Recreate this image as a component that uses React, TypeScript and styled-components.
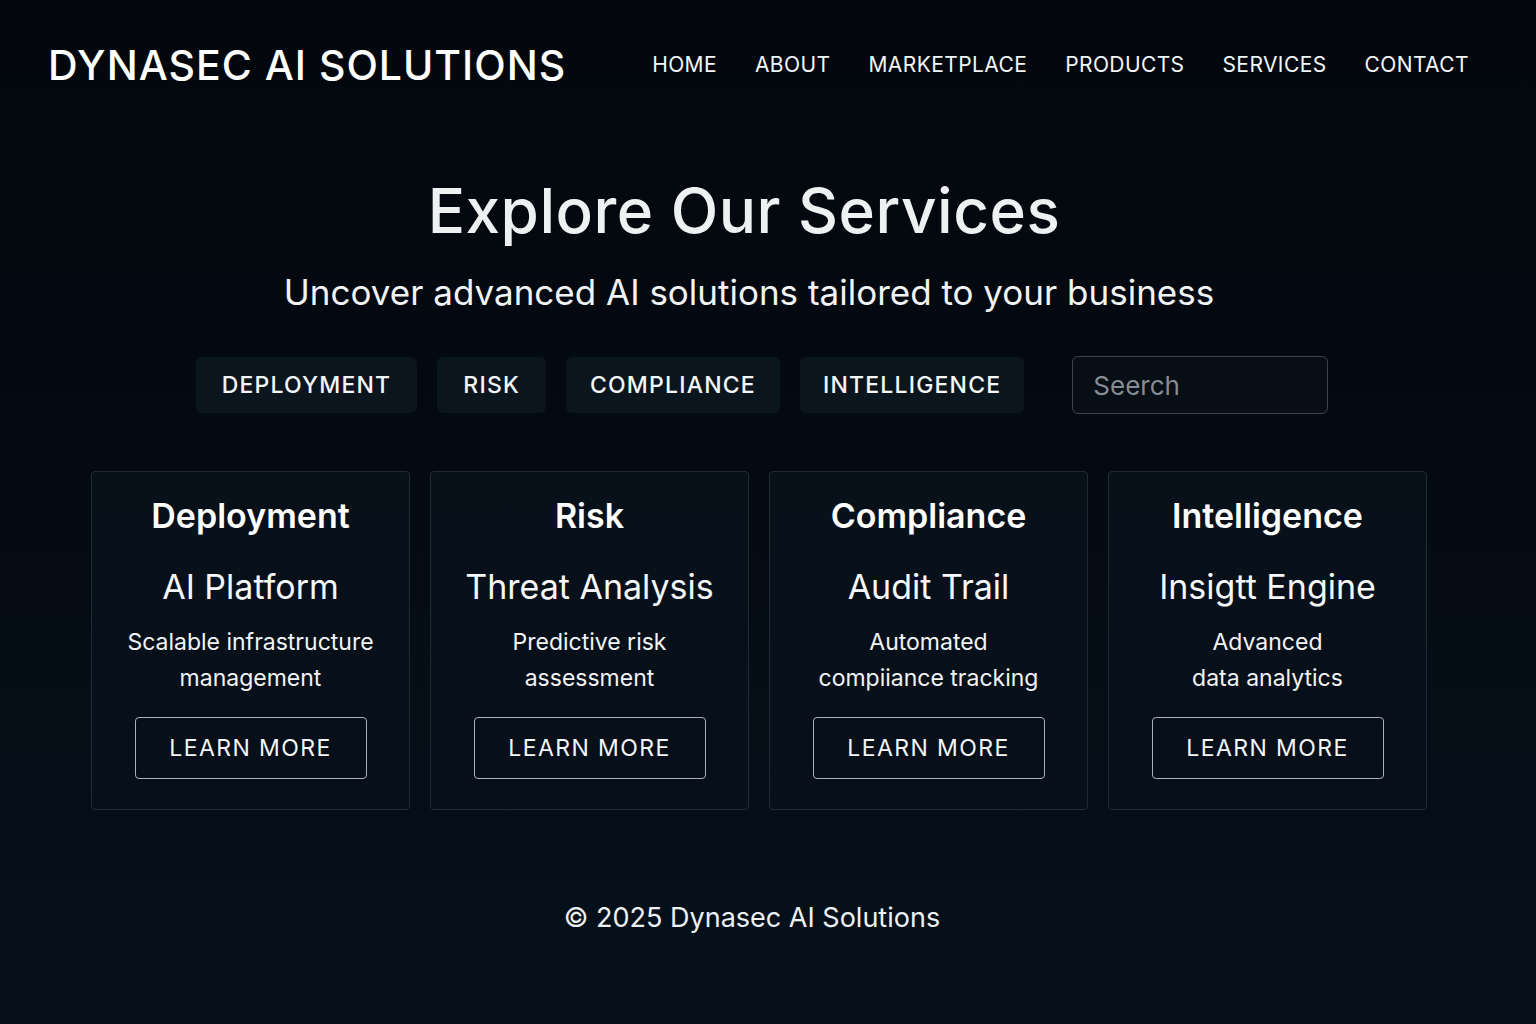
import React from 'react';
import styled, { createGlobalStyle } from 'styled-components';

const GlobalStyle = createGlobalStyle`
  html, body {
    margin: 0;
    padding: 0;
  }
  body {
    background: linear-gradient(180deg, #03070d 0%, #040a12 45%, #06111c 100%);
    color: #f3f5f7;
    font-family: Inter, "Noto Sans", "Liberation Sans", sans-serif;
    min-height: 1024px;
  }
`

const Page = styled.div`
  width: 1536px;
  min-height: 1024px;
  display: flex;
  flex-direction: column;
`

const Header = styled.header`
  display: flex;
  align-items: center;
  justify-content: space-between;
  height: 130px;
  padding: 0 67px 0 48px;
  box-sizing: border-box;
`

const Logo = styled.div`
  font-size: 41px;
  font-weight: 500;
  letter-spacing: 1px;
  color: #ffffff;
`

const Nav = styled.nav`
  display: flex;
  align-items: center;
  gap: 38px;
`

const NavLink = styled.a`
  font-size: 21px;
  font-weight: 400;
  letter-spacing: 0.4px;
  color: #f4f6f8;
  text-decoration: none;
  margin-top: -2px;
`

const Main = styled.main`
  display: flex;
  flex-direction: column;
  align-items: center;
  padding: 44px 0 0 0;
  margin-left: 91px;
  width: 1336px;
`

const Title = styled.h1`
  margin: 0;
  font-size: 62px;
  font-weight: 500;
  letter-spacing: 0.5px;
  color: #eef0f2;
  line-height: 1.2;
  margin-right: 30px;
`

const Subtitle = styled.p`
  margin: 23px 0 0 0;
  font-size: 35px;
  font-weight: 400;
  color: #f1f3f5;
  line-height: 1.2;
  margin-right: 20px;
`

const FilterRow = styled.div`
  display: flex;
  align-items: center;
  margin-top: 43px;
  margin-left: 6px;
`

const Chips = styled.div`
  display: flex;
  gap: 20px;
`

const Chip = styled.button<{ $pad: number }>`
  height: 56px;
  padding: 0 ${p => p.$pad}px;
  border: none;
  border-radius: 6px;
  background: #0b151e;
  color: #f4f6f8;
  font-family: inherit;
  font-size: 23px;
  font-weight: 500;
  letter-spacing: 1.2px;
`

const Search = styled.input`
  margin-left: 48px;
  width: 256px;
  height: 58px;
  box-sizing: border-box;
  border: 1px solid #3b444d;
  border-radius: 6px;
  background: #070e16;
  color: #f4f6f8;
  font-family: inherit;
  font-size: 26px;
  padding: 0 20px;
  outline: none;
  &::placeholder {
    color: #858c94;
  }
`

const Cards = styled.div`
  display: grid;
  grid-template-columns: repeat(4, 319px);
  gap: 20px;
  margin-top: 57px;
`

const Card = styled.div`
  height: 339px;
  box-sizing: border-box;
  border: 1px solid #212b34;
  border-radius: 4px;
  background: linear-gradient(180deg, #08111a 0%, #07101a 100%);
  display: flex;
  flex-direction: column;
  align-items: center;
  padding-top: 24px;
`

const CardTitle = styled.h2`
  margin: 0;
  font-size: 34px;
  font-weight: 600;
  color: #ffffff;
  line-height: 1.2;
`

const CardSub = styled.h3`
  margin: 30px 0 0 0;
  font-size: 34px;
  font-weight: 400;
  color: #f6f7f9;
  line-height: 1.2;
`

const CardDesc = styled.p`
  margin: 16px 0 0 0;
  font-size: 23px;
  font-weight: 400;
  color: #f2f4f6;
  line-height: 36px;
  text-align: center;
  height: 72px;
`

const LearnMore = styled.button`
  margin-top: 21px;
  width: 232px;
  height: 62px;
  border: 1px solid #a9b0b8;
  border-radius: 4px;
  background: transparent;
  color: #f4f6f8;
  font-family: inherit;
  font-size: 23px;
  font-weight: 400;
  letter-spacing: 1.4px;
`

const Footer = styled.footer`
  margin-top: 91px;
  text-align: center;
  font-size: 27px;
  color: #eef1f4;
  margin-right: 14px;
`

const navItems = ['HOME', 'ABOUT', 'MARKETPLACE', 'PRODUCTS', 'SERVICES', 'CONTACT'];

const chips = [
  { label: 'DEPLOYMENT', pad: 26 },
  { label: 'RISK', pad: 26 },
  { label: 'COMPLIANCE', pad: 24 },
  { label: 'INTELLIGENCE', pad: 23 },
];

const services = [
  { title: 'Deployment', sub: 'AI Platform', desc: ['Scalable infrastructure', 'management'] },
  { title: 'Risk', sub: 'Threat Analysis', desc: ['Predictive risk', 'assessment'] },
  { title: 'Compliance', sub: 'Audit Trail', desc: ['Automated', 'compiiance tracking'] },
  { title: 'Intelligence', sub: 'Insigtt Engine', desc: ['Advanced', 'data analytics'] },
];

function App() {
  return (
    <Page>
      <GlobalStyle />
      <Header>
        <Logo>DYNASEC AI SOLUTIONS</Logo>
        <Nav>
          {navItems.map(item => (
            <NavLink key={item} href="#">{item}</NavLink>
          ))}
        </Nav>
      </Header>
      <Main>
        <Title>Explore Our Services</Title>
        <Subtitle>Uncover advanced AI solutions tailored to your business</Subtitle>
        <FilterRow>
          <Chips>
            {chips.map(c => (
              <Chip key={c.label} $pad={c.pad}>{c.label}</Chip>
            ))}
          </Chips>
          <Search placeholder="Seerch" />
        </FilterRow>
        <Cards>
          {services.map(s => (
            <Card key={s.title}>
              <CardTitle>{s.title}</CardTitle>
              <CardSub>{s.sub}</CardSub>
              <CardDesc>
                {s.desc[0]}
                <br />
                {s.desc[1]}
              </CardDesc>
              <LearnMore>LEARN MORE</LearnMore>
            </Card>
          ))}
        </Cards>
        <Footer>© 2025 Dynasec AI Solutions</Footer>
      </Main>
    </Page>
  );
}

export default App;
